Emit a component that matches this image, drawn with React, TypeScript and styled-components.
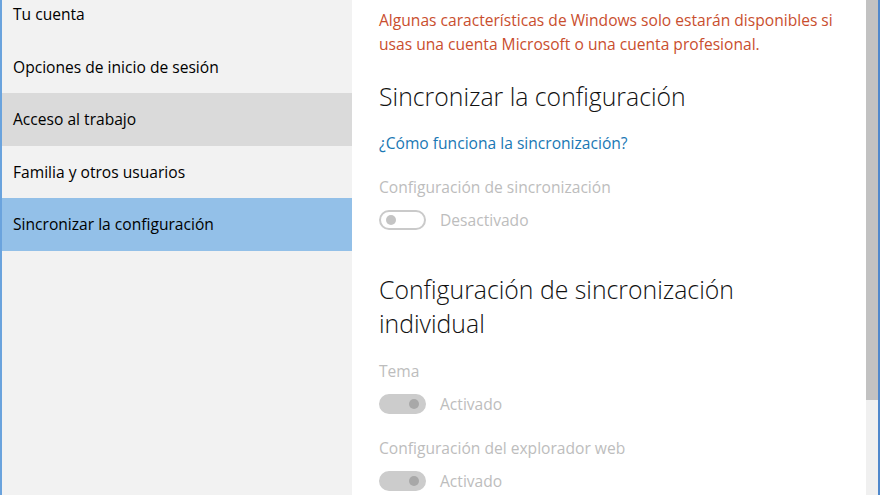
import styled, { createGlobalStyle } from 'styled-components'

const GlobalStyle = createGlobalStyle`
  html, body {
    margin: 0;
    padding: 0;
    overflow: hidden;
    background: #ffffff;
  }
  * {
    box-sizing: border-box;
  }
`

const Window = styled.div`
  display: flex;
  width: 880px;
  height: 495px;
  overflow: hidden;
  border-left: 2px solid #6aa3dd;
  border-right: 2px solid #4f88cc;
  font-family: 'Open Sans', 'Noto Sans', sans-serif;
`

const Sidebar = styled.nav`
  width: 350px;
  flex-shrink: 0;
  background: #f2f2f2;
  overflow: hidden;
`

const NavList = styled.ul`
  list-style: none;
  margin: -12px 0 0;
  padding: 0;
`

const NavItem = styled.li<{ $state?: 'hover' | 'active' }>`
  height: 52.5px;
  display: flex;
  align-items: center;
  padding-left: 11px;
  font-size: 15.6px;
  color: #000;
  background: ${(p) => (p.$state === 'active' ? '#93c0e8' : p.$state === 'hover' ? '#dadada' : 'transparent')};
`

const Content = styled.main`
  flex: 1;
  background: #fff;
  padding: 8px 0 0 27px;
  overflow: hidden;
`

const Warning = styled.p`
  margin: 0;
  width: 458px;
  font-size: 15.6px;
  line-height: 24px;
  color: #c94e2e;
`

const Heading = styled.h2<{ $gap: number }>`
  margin: ${(p) => p.$gap}px 0 0;
  width: 440px;
  font-size: 24.8px;
  font-weight: 300;
  line-height: 34px;
  color: #111;
`

const Link = styled.a`
  display: block;
  margin-top: 19px;
  font-size: 15.6px;
  line-height: 22px;
  color: #1a78b4;
  text-decoration: none;
`

const Setting = styled.div<{ $gap: number }>`
  margin-top: ${(p) => p.$gap}px;
`

const Label = styled.div`
  font-size: 15.6px;
  line-height: 22px;
  color: #bdbdbd;
`

const ToggleRow = styled.div`
  display: flex;
  align-items: center;
  gap: 14px;
  margin-top: 11px;
`

const Toggle = styled.span<{ $on: boolean }>`
  position: relative;
  width: 47px;
  height: 20px;
  border-radius: 10px;
  border: 2px solid ${(p) => (p.$on ? '#cccccc' : '#cacaca')};
  background: ${(p) => (p.$on ? '#cccccc' : '#ffffff')};

  &::after {
    content: '';
    position: absolute;
    top: 3px;
    ${(p) => (p.$on ? 'right: 5px;' : 'left: 5px;')}
    width: 10px;
    height: 10px;
    border-radius: 50%;
    background: ${(p) => (p.$on ? '#a8a8a8' : '#c4c4c4')};
  }
`

const State = styled.span`
  font-size: 15.6px;
  color: #bdbdbd;
`

const Scrollbar = styled.div`
  width: 12px;
  flex-shrink: 0;
  display: flex;
  flex-direction: column;
  background: #f0f0f0;
`

const Thumb = styled.div`
  height: 400px;
  background: #c2c2c2;
`

const navItems: { label: string; state?: 'hover' | 'active' }[] = [
  { label: 'Tu cuenta' },
  { label: 'Opciones de inicio de sesión' },
  { label: 'Acceso al trabajo', state: 'hover' },
  { label: 'Familia y otros usuarios' },
  { label: 'Sincronizar la configuración', state: 'active' },
  { label: '' },
  { label: '' },
  { label: '' },
]

const SettingToggle = ({ label, on, gap }: { label: string; on: boolean; gap: number }) => (
  <Setting $gap={gap}>
    <Label>{label}</Label>
    <ToggleRow>
      <Toggle $on={on} />
      <State>{on ? 'Activado' : 'Desactivado'}</State>
    </ToggleRow>
  </Setting>
)

export default function App() {
  return (
    <>
      <GlobalStyle />
      <Window>
        <Sidebar>
          <NavList>
            {navItems.map((item, i) => (
              <NavItem key={i} $state={item.state}>
                {item.label}
              </NavItem>
            ))}
          </NavList>
        </Sidebar>
        <Content>
          <Warning>
            Algunas características de Windows solo estarán disponibles si usas una cuenta Microsoft o una cuenta
            profesional.
          </Warning>
          <Heading $gap={23}>Sincronizar la configuración</Heading>
          <Link href="#">¿Cómo funciona la sincronización?</Link>
          <SettingToggle label="Configuración de sincronización" on={false} gap={22} />
          <Heading $gap={41}>Configuración de sincronización individual</Heading>
          <SettingToggle label="Tema" on gap={20} />
          <SettingToggle label="Configuración del explorador web" on gap={22} />
        </Content>
        <Scrollbar>
          <Thumb />
        </Scrollbar>
      </Window>
    </>
  )
}
